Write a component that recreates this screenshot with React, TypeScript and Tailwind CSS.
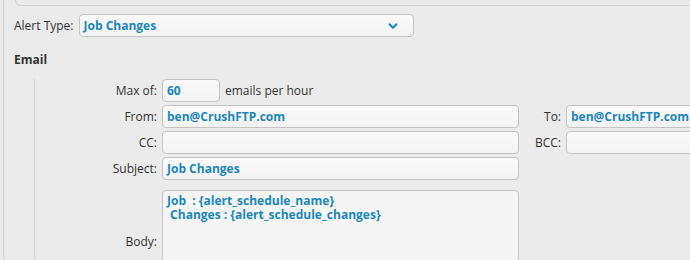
import { ChevronDown } from "lucide-react";

const field =
  "h-[23px] rounded-[4px] border border-[#c4c4c4] bg-gradient-to-b from-[#fafafa] to-[#f3f3f3] px-[4px] flex items-center text-[#1a87bd] font-bold";

function Label({ children, className = "" }: { children: React.ReactNode; className?: string }) {
  return <div className={`flex items-center justify-end text-[#333] ${className}`}>{children}</div>;
}

export default function App() {
  return (
    <div
      className="w-[690px] h-[260px] overflow-hidden bg-[#ebebeb] pl-[3px] text-[12px]"
      style={{ fontFamily: '"Open Sans", "Liberation Sans", sans-serif' }}
    >
      <div className="h-full border-l border-[#d2d2d2]">
        {/* bottom edge of panel above */}
        <div className="ml-[11px] h-[6px] rounded-bl-[10px] border-b border-l border-[#d2d2d2]" />

        {/* Alert type */}
        <div className="mt-[8px] flex items-center pl-[10px]">
          <span className="text-[#333]">Alert Type:</span>
          <div className={`${field} ml-[5px] w-[335px] justify-between pr-[13px]`}>
            <span>Job Changes</span>
            <ChevronDown size={14} strokeWidth={3.5} className="text-[#1a87bd]" />
          </div>
        </div>

        <div className="mt-[14px] pl-[10px] font-bold text-[#333]">Email</div>

        <div className="ml-[30px] mt-[10px] border-l border-[#d2d2d2]">
          <div className="grid grid-cols-[122px_357px_37px_200px] gap-x-[5px] gap-y-[3px]">
            <Label>Max of:</Label>
            <div className="flex items-center">
              <div className={`${field} w-[58px]`}>60</div>
              <span className="ml-[5px] text-[#333]">emails per hour</span>
            </div>
            <div />
            <div />

            <Label>From:</Label>
            <div className={field}>ben@CrushFTP.com</div>
            <Label>To:</Label>
            <div className={field}>ben@CrushFTP.com</div>

            <Label>CC:</Label>
            <div className={field} />
            <Label>BCC:</Label>
            <div className={field} />

            <Label>Subject:</Label>
            <div className={field}>Job Changes</div>
            <div />
            <div />

            <Label className="mt-[7px]">Body:</Label>
            <div className="mt-[7px] h-[104px] rounded-[4px] border border-[#c4c4c4] bg-[#f5f5f5] px-[4px] pt-[3px] font-bold leading-[14px] text-[#1a87bd] whitespace-pre">
              {"Job  : {alert_schedule_name}\n Changes : {alert_schedule_changes}"}
            </div>
            <div />
            <div />
          </div>
        </div>
      </div>
    </div>
  );
}
